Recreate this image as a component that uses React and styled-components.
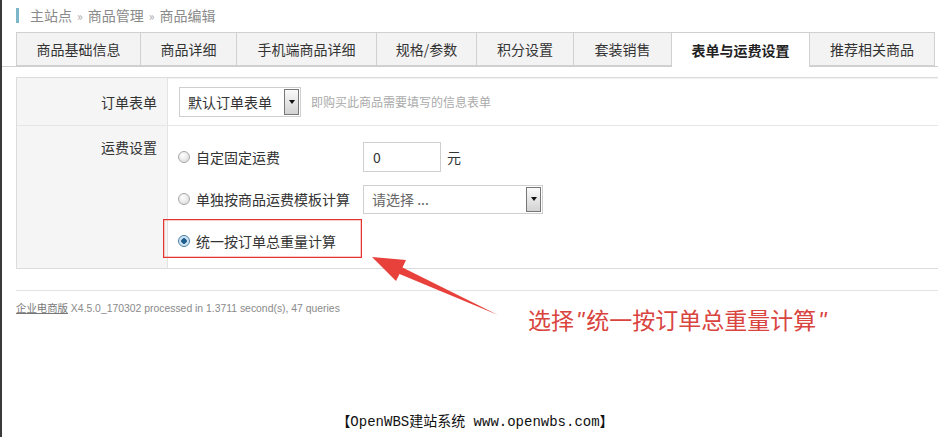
import React from "react";
import styled, { createGlobalStyle } from "styled-components";

const GlobalStyle = createGlobalStyle`
  html, body {
    margin: 0;
    padding: 0;
    background: #fff;
    overflow: hidden;
  }
  body {
    font-family: "Noto Sans CJK SC", "Noto Sans", sans-serif;
    color: #333;
  }
`;

const Page = styled.div`
  position: relative;
  width: 938px;
  height: 437px;
  box-sizing: border-box;
  border-left: 2px solid #3a3a3a;
  overflow: hidden;
`;

const Inner = styled.div`
  padding-left: 14px;
`;

// breadcrumb
const Crumbs = styled.div`
  display: flex;
  align-items: center;
  height: 32px;
  box-sizing: border-box;
  padding-bottom: 2px;
  font-size: 14px;
  color: #8a8a8a;
  gap: 5px;
`;

const CrumbMark = styled.span`
  width: 3px;
  height: 15px;
  background: #7db6c8;
  margin-right: 6px;
`;

const CrumbSep = styled.span`
  font-size: 12px;
  color: #aaa;
`;

// tabs
const TabBar = styled.div`
  display: flex;
  margin-left: -14px;
  padding-left: 14px;
  border-bottom: 1px solid #d0d0d0;
  height: 34px;
`;

const Tab = styled.div`
  display: flex;
  align-items: center;
  justify-content: center;
  width: ${(p) => p.w}px;
  box-sizing: border-box;
  height: ${(p) => (p.active ? "35px" : "34px")};
  border: 1px solid #d0d0d0;
  border-bottom: ${(p) => (p.active ? "none" : "1px solid #d0d0d0")};
  margin-left: -1px;
  background: ${(p) => (p.active ? "#fff" : "#f3f3f3")};
  font-size: 14px;
  font-weight: ${(p) => (p.active ? 700 : 400)};
  color: ${(p) => (p.active ? "#222" : "#333")};
  &:first-child {
    margin-left: 0;
  }
`;

// form table
const FormTable = styled.div`
  margin-top: 10px;
  width: 960px;
  border: 1px solid #dcdcdc;
  box-shadow: inset 1px 1px 0 #f0f0f0;
`;

const Row = styled.div`
  display: grid;
  grid-template-columns: 151px 1fr;
  border-top: ${(p) => (p.first ? "none" : "1px solid #e6e6e6")};
`;

const Label = styled.div`
  background: #f5f5f5;
  border-right: 1px solid #e3e3e3;
  text-align: right;
  padding: ${(p) => (p.top ? "11px 10px 0 0" : "0 10px 0 0")};
  display: flex;
  align-items: ${(p) => (p.top ? "flex-start" : "center")};
  justify-content: flex-end;
  font-size: 14px;
  line-height: 20px;
  color: #333;
`;

const Value = styled.div`
  display: flex;
  flex-direction: ${(p) => (p.column ? "column" : "row")};
  align-items: ${(p) => (p.column ? "stretch" : "center")};
  gap: ${(p) => (p.column ? "12px" : "0")};
  padding: ${(p) => p.pad};
  box-sizing: border-box;
  min-height: ${(p) => p.h || 0}px;
`;

const Select = styled.div`
  display: flex;
  align-items: stretch;
  width: ${(p) => p.w}px;
  height: ${(p) => p.h}px;
  box-sizing: border-box;
  border: 1px solid #cfcfcf;
  background: #fff;
`;

const SelectText = styled.div`
  flex: 1;
  display: flex;
  align-items: center;
  padding-left: 8px;
  font-size: 14px;
  color: ${(p) => (p.muted ? "#666" : "#333")};
`;

const SelectButton = styled.div`
  width: 15px;
  margin: 1px;
  box-sizing: border-box;
  border: 1px solid #777;
  background: linear-gradient(#fafafa, #d2d2d2);
  display: flex;
  align-items: center;
  justify-content: center;
  &::after {
    content: "";
    border-left: 3.5px solid transparent;
    border-right: 3.5px solid transparent;
    border-top: 4px solid #111;
  }
`;

const Hint = styled.span`
  margin-left: 10px;
  font-size: 12px;
  color: #aaa;
`;

const Option = styled.div`
  display: grid;
  grid-template-columns: 185px auto;
  align-items: center;
  height: 30px;
`;

const RadioLabel = styled.label`
  display: flex;
  align-items: center;
  gap: 6px;
  font-size: 14px;
  color: #333;
`;

const Radio = styled.span`
  width: 12px;
  height: 12px;
  box-sizing: border-box;
  border-radius: 50%;
  border: 1px solid ${(p) => (p.checked ? "#4a7fa6" : "#a8a8a8")};
  background: ${(p) =>
    p.checked
      ? "radial-gradient(circle, #1f5f8f 0 2.5px, #cfe4f3 3px 100%)"
      : "radial-gradient(circle at 40% 35%, #fff, #d6d6d6)"};
`;

const TextInput = styled.div`
  display: flex;
  align-items: center;
  gap: 6px;
  font-size: 14px;
`;

const InputBox = styled.div`
  width: 78px;
  height: 30px;
  box-sizing: border-box;
  border: 1px solid #cfcfcf;
  padding-left: 9px;
  display: flex;
  align-items: center;
  font-size: 14px;
  color: #333;
`;

// footer
const Footer = styled.div`
  margin-top: 21px;
  border-top: 1px solid #e3e3e3;
  width: 960px;
  padding-top: 9px;
  font-family: "Liberation Sans", "Noto Sans CJK SC", sans-serif;
  font-size: 10.4px;
  color: #8a8a8a;
`;

const FooterLink = styled.span`
  color: #777;
  text-decoration: underline;
  font-family: "Noto Sans CJK SC", sans-serif;
`;

const Stamp = styled.div`
  margin-top: 95px;
  text-align: center;
  padding-right: 4px;
  font-family: "Liberation Mono", "Noto Sans CJK SC", monospace;
  font-size: 14px;
  color: #111;
`;

// annotation overlays
const Highlight = styled.div`
  position: absolute;
  left: 161px;
  top: 219px;
  width: 199px;
  height: 39px;
  box-sizing: border-box;
  border: 1px solid #e5332e;
  box-shadow: inset 0 0 0 0.5px rgba(229, 51, 46, 0.5);
`;

const Note = styled.div`
  position: absolute;
  left: 526px;
  top: 302px;
  font-size: 23px;
  color: #d9443f;
  white-space: nowrap;
`;

const Quote = styled.span`
  font-family: "Liberation Sans", sans-serif;
  font-style: italic;
  margin: 0 2px;
`;

const ArrowLayer = styled.svg`
  position: absolute;
  left: -2px;
  top: 0;
  pointer-events: none;
`;

const tabs = [
  ["商品基础信息", 125],
  ["商品详细", 97],
  ["手机端商品详细", 141],
  ["规格/参数", 101],
  ["积分设置", 98],
  ["套装销售", 99],
  ["表单与运费设置", 139],
  ["推荐相关商品", 126],
];

const App = () => {
  return (
    <>
      <GlobalStyle />
      <Page>
        <Inner>
          <Crumbs>
            <CrumbMark />
            主站点 <CrumbSep>»</CrumbSep> 商品管理 <CrumbSep>»</CrumbSep> 商品编辑
          </Crumbs>

          <TabBar>
            {tabs.map(([name, w], i) => (
              <Tab key={name} w={w} active={i === 6}>
                {name}
              </Tab>
            ))}
          </TabBar>

          <FormTable>
            <Row first>
              <Label>订单表单</Label>
              <Value pad="0 0 0 11px" h={47}>
                <Select w={122} h={30}>
                  <SelectText>默认订单表单</SelectText>
                  <SelectButton />
                </Select>
                <Hint>即购买此商品需要填写的信息表单</Hint>
              </Value>
            </Row>
            <Row>
              <Label top>运费设置</Label>
              <Value column pad="16px 0 12px 10px">
                <Option>
                  <RadioLabel>
                    <Radio />
                    自定固定运费
                  </RadioLabel>
                  <TextInput>
                    <InputBox>0</InputBox>元
                  </TextInput>
                </Option>
                <Option>
                  <RadioLabel>
                    <Radio />
                    单独按商品运费模板计算
                  </RadioLabel>
                  <Select w={180} h={29}>
                    <SelectText muted>请选择 ...</SelectText>
                    <SelectButton />
                  </Select>
                </Option>
                <Option>
                  <RadioLabel>
                    <Radio checked />
                    统一按订单总重量计算
                  </RadioLabel>
                </Option>
              </Value>
            </Row>
          </FormTable>

          <Footer>
            <FooterLink>企业电商版</FooterLink> X4.5.0_170302 processed in 1.3711
            second(s), 47 queries
          </Footer>

          <Stamp>【OpenWBS建站系统 www.openwbs.com】</Stamp>
        </Inner>

        <Highlight />
        <ArrowLayer width="938" height="437" viewBox="0 0 938 437">
          <polygon
            fill="#e8413c"
            points="372,257 406,260 402.5,267.5 498,315 399.5,274 396,281"
          />
        </ArrowLayer>
        <Note>
          选择<Quote>"</Quote>统一按订单总重量计算<Quote>"</Quote>
        </Note>
      </Page>
    </>
  );
};

export default App;
